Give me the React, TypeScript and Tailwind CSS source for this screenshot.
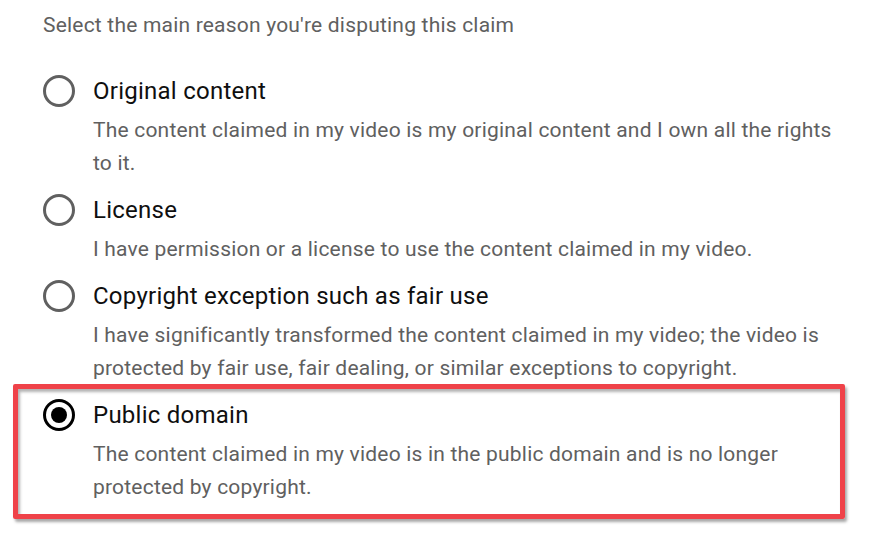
import React from 'react';

interface Reason {
  id: string;
  title: string;
  lines: string[];
}

const reasons: Reason[] = [
  {
    id: 'original',
    title: 'Original content',
    lines: [
      'The content claimed in my video is my original content and I own all the rights',
      'to it.',
    ],
  },
  {
    id: 'license',
    title: 'License',
    lines: ['I have permission or a license to use the content claimed in my video.'],
  },
  {
    id: 'exception',
    title: 'Copyright exception such as fair use',
    lines: [
      'I have significantly transformed the content claimed in my video; the video is',
      'protected by fair use, fair dealing, or similar exceptions to copyright.',
    ],
  },
  {
    id: 'public',
    title: 'Public domain',
    lines: [
      'The content claimed in my video is in the public domain and is no longer',
      'protected by copyright.',
    ],
  },
];

const Radio: React.FC<{ checked: boolean }> = ({ checked }) => (
  <div
    className={`w-8 h-8 shrink-0 rounded-full border-[3px] flex items-center justify-center ${
      checked ? 'border-black' : 'border-[#606060]'
    }`}
  >
    {checked && <div className="w-4 h-4 rounded-full bg-black" />}
  </div>
);

const Option: React.FC<{ reason: Reason; checked: boolean }> = ({ reason, checked }) => (
  <div className="flex gap-[18px]">
    <Radio checked={checked} />
    <div>
      <div className="text-[24px] leading-[32px] tracking-[0.25px] text-[#0f0f0f]">{reason.title}</div>
      <div className="mt-[7px] text-[21px] leading-[33px] tracking-[0.2px] text-[#606060]">
        {reason.lines.map((line, i) => (
          <React.Fragment key={i}>
            {i > 0 && <br />}
            {line}
          </React.Fragment>
        ))}
      </div>
    </div>
  </div>
);

export default function App() {
  const selected = 'public';

  return (
    <div className="w-[889px] h-[543px] bg-white overflow-hidden font-['Roboto',sans-serif] pl-[43px] pt-[10px]">
      <p className="text-[21px] leading-[30px] tracking-[0.2px] text-[#606060]">
        Select the main reason you're disputing this claim
      </p>

      <div className="mt-[35px] flex flex-col gap-[14px]">
        {reasons.map((r) =>
          r.id === selected ? (
            <div key={r.id} className="relative">
              <Option reason={r} checked />
              {/* red annotation box drawn over the chosen option */}
              <div className="absolute left-[-30px] top-[-15px] w-[832px] h-[135px] border-[5px] border-[#ef4249] rounded-[2px] shadow-[2px_3px_3px_rgba(0,0,0,0.35),inset_2px_3px_3px_rgba(0,0,0,0.3)] pointer-events-none" />
            </div>
          ) : (
            <Option key={r.id} reason={r} checked={false} />
          )
        )}
      </div>
    </div>
  );
}
